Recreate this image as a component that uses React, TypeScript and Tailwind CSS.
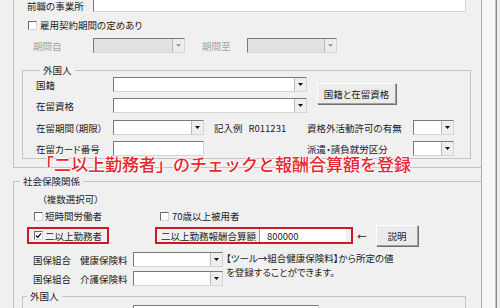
import React from "react";

function Arrow({ disabled }: { disabled?: boolean }) {
  return (
    <svg width="5" height="3" viewBox="0 0 5 3">
      <path d="M0 0H5L2.5 3Z" fill={disabled ? "#9c9c9c" : "#111"} />
    </svg>
  );
}

function Combo({ cls, disabled }: { cls: string; disabled?: boolean }) {
  return (
    <div
      className={`flex h-[15px] shrink-0 border border-t-[#7a7a7a] border-l-[#7a7a7a] border-r-[#d4d4d4] border-b-[#d4d4d4] ${
        disabled ? "bg-[#e2e2e2]" : "bg-white"
      } ${cls}`}
    >
      <div className="flex-1" />
      <div
        className={`w-[12px] h-full flex items-center justify-center border-l border-[#b9b9b9] ${
          disabled ? "bg-[#ececec]" : "bg-[#eeeeee]"
        }`}
      >
        <Arrow disabled={disabled} />
      </div>
    </div>
  );
}

function TextBox({ cls }: { cls: string }) {
  return (
    <div
      className={`h-[15px] shrink-0 bg-white border border-t-[#7a7a7a] border-l-[#7a7a7a] border-r-[#d4d4d4] border-b-[#d4d4d4] ${cls}`}
    />
  );
}

function Check({ checked }: { checked?: boolean }) {
  return (
    <span className="flex w-[9px] h-[9px] shrink-0 items-center justify-center bg-white border border-t-[#6a6a6a] border-l-[#6a6a6a] border-r-[#d6d6d6] border-b-[#d6d6d6]">
      {checked && (
        <svg width="7" height="7" viewBox="0 0 7 7">
          <path d="M1 3.5L2.8 5.3L6 1.3" stroke="#111" strokeWidth="1.3" fill="none" />
        </svg>
      )}
    </span>
  );
}

function Btn({ cls, children }: { cls: string; children: React.ReactNode }) {
  return (
    <div
      className={`flex shrink-0 items-center justify-center bg-[#ebebeb] border border-t-white border-l-white border-r-[#a0a0a0] border-b-[#a0a0a0] shadow-[1px_1px_0_#6f6f6f] ${cls}`}
    >
      {children}
    </div>
  );
}

export default function App() {
  return (
    <div className="relative flex w-[500px] h-[308px] overflow-hidden bg-[#f0f0f0] text-[9.5px] leading-[12px] text-[#222] font-['Noto_Sans_CJK_JP',sans-serif] [font-feature-settings:'palt']">
      <div className="w-[482px] h-full shrink-0 border-r border-[#acacac] flex flex-col">
        {/* upper group */}
        <div className="ml-[13px] border-l border-b border-[#c4c4c4] pl-[8px] pb-[8px] flex flex-col">
          <div className="mt-[-3px] flex items-start h-[15px]">
            <span className="ml-[5px] w-[66px] mt-[3px]">前職の事業所</span>
            <TextBox cls="w-[373px]" />
          </div>
          <div className="mt-[7px] flex items-center h-[12px]">
            <span className="ml-[6px]">
              <Check />
            </span>
            <span className="ml-[3px]">雇用契約期間の定めあり</span>
          </div>
          <div className="mt-[7px] flex items-center h-[15px] text-[#a3a3a3]">
            <span className="ml-[11px] w-[60px]">期間自</span>
            <Combo cls="w-[92px]" disabled />
            <span className="ml-[17px] w-[45px]">期間至</span>
            <Combo cls="w-[90px]" disabled />
          </div>
          <fieldset className="mt-[11px] w-[449px] border border-[#c4c4c4] pt-[1px] pl-[13px] pb-[2px]">
            <legend className="ml-[4px] px-[3px] leading-[12px]">外国人</legend>
            <div className="flex">
              <div className="flex flex-col gap-[6px]">
                <div className="flex items-center h-[15px]">
                  <span className="w-[77px]">国籍</span>
                  <Combo cls="w-[194px]" />
                </div>
                <div className="flex items-center h-[15px]">
                  <span className="w-[77px]">在留資格</span>
                  <Combo cls="w-[194px]" />
                </div>
              </div>
              <Btn cls="ml-[10px] mt-[6px] w-[79px] h-[21px]">国籍と在留資格</Btn>
            </div>
            <div className="mt-[7px] flex items-center h-[15px]">
              <span className="w-[77px]">在留期間（期限）</span>
              <Combo cls="w-[91px]" />
              <span className="ml-[10px] w-[93px] flex">
                <span>記入例</span>
                <span className="ml-[6px]">R011231</span>
              </span>
              <span className="w-[106px]">資格外活動許可の有無</span>
              <Combo cls="w-[41px]" />
            </div>
            <div className="mt-[6px] flex items-center h-[15px]">
              <span className="w-[77px]">在留カード番号</span>
              <TextBox cls="w-[91px]" />
              <span className="ml-[103px] w-[106px]">派遣・請負就労区分</span>
              <Combo cls="w-[41px]" />
            </div>
          </fieldset>
        </div>

        {/* social insurance group */}
        <fieldset className="ml-[13px] mt-[7px] border-l border-t border-[#c4c4c4] flex-1">
          <legend className="ml-[6px] px-[3px] leading-[12px]">社会保険関係</legend>
          <div className="mt-[6px] ml-[28px] h-[12px] flex items-center">（複数選択可）</div>
          <div className="mt-[5px] h-[12px] flex items-center">
            <span className="ml-[20px] w-[126px] flex items-center">
              <Check />
              <span className="ml-[2px]">短時間労働者</span>
            </span>
            <Check />
            <span className="ml-[3px]">70歳以上被用者</span>
          </div>
          <div className="mt-[3px] h-[21px] flex items-center">
            <div className="ml-[13px] w-[82px] h-[17px] border-2 border-[#cc1a22] flex items-center pl-[5px]">
              <Check checked />
              <span className="ml-[2px]">二以上勤務者</span>
            </div>
            <div className="ml-[46px] w-[198px] h-[17px] border-2 border-[#cc1a22] flex items-center pl-[4px]">
              <span className="w-[97px]">二以上勤務報酬合算額</span>
              <div className="ml-[1px] w-[87px] h-[13px] bg-white border-l border-[#9a9a9a] pl-[7px] flex items-center">
                800000
              </div>
            </div>
            <span className="ml-[4px] w-[14px]">←</span>
            <Btn cls="ml-[5px] w-[42px] h-[21px]">説明</Btn>
          </div>
          <div className="mt-[6px] flex">
            <div className="flex flex-col gap-[4px]">
              <div className="flex items-center h-[15px]">
                <span className="ml-[19px] w-[100px] flex">
                  <span>国保組合</span>
                  <span className="ml-[9px]">健康保険料</span>
                </span>
                <Combo cls="w-[90px]" />
              </div>
              <div className="flex items-center h-[15px]">
                <span className="ml-[19px] w-[100px] flex">
                  <span>国保組合</span>
                  <span className="ml-[9px]">介護保険料</span>
                </span>
                <Combo cls="w-[90px]" />
              </div>
            </div>
            <div className="ml-[3px] mt-[-1px] leading-[14px]">
              <div>【ツール→組合健康保険料】から所定の値</div>
              <div>を登録することができます。</div>
            </div>
          </div>
          <fieldset className="mt-[4px] ml-[8px] w-[444px] border border-[#c4c4c4] pt-[3px]">
            <legend className="ml-[4px] px-[3px] leading-[12px]">外国人</legend>
            <div className="ml-[110px]">
              <TextBox cls="w-[186px]" />
            </div>
          </fieldset>
        </fieldset>
      </div>
      <div className="w-[13px] h-full bg-[#f7f7f7]" />
      <div className="w-[1px] h-full bg-[#c6c6c6]" />
      <div className="w-[1px] h-full bg-[#8a8a8a]" />
      <div className="flex-1 h-full bg-[#f0f0f0]" />

      <div className="absolute left-[37px] top-[155px] text-[17px] leading-[17px] text-[#e8262d] font-medium [font-feature-settings:normal] [text-shadow:-1px_0_#fff,1px_0_#fff,0_-1px_#fff,0_1px_#fff]">
        「二以上勤務者」のチェックと報酬合算額を登録
      </div>
    </div>
  );
}
